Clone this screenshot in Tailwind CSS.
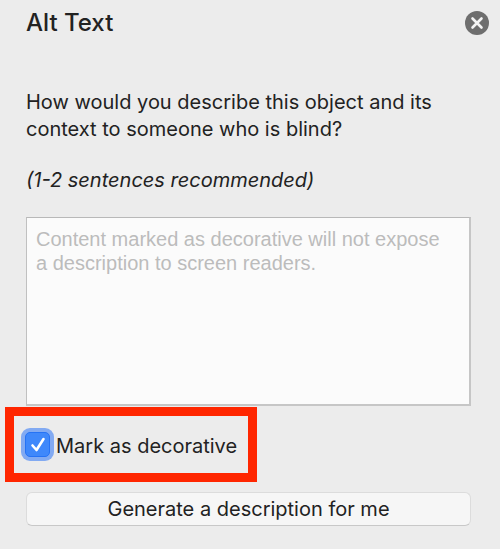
<!DOCTYPE html>
<html lang="en">
<head>
<meta charset="utf-8">
<title>Alt Text</title>
<script src="https://cdn.jsdelivr.net/npm/@tailwindcss/browser@4"></script>
</head>
<body class="min-h-screen bg-[#ececec] font-['Inter',sans-serif] text-[20px] leading-[27px] text-[#222]">
<main class="pt-2 pr-[29px] pb-[23px] pl-[26px]">
  <header class="-mr-[18px] flex items-center justify-between">
    <h1 class="pt-px text-[24px] leading-[28px] font-medium">Alt Text</h1>
    <button type="button" aria-label="Close" class="size-6">
      <svg viewBox="0 0 24 24" class="size-6"><circle cx="12" cy="12" r="12" fill="#6e6e6e"/><path d="M7.500 7.500l9 9M16.500 7.500l-9 9" stroke="#f4f4f4" stroke-width="2.600" stroke-linecap="round"/></svg>
    </button>
  </header>
  <label for="description" class="mt-[52px] block">How would you describe this object and its<br>context to someone who is blind?</label>
  <p class="mt-6 italic">(1-2 sentences recommended)</p>
  <textarea id="description" placeholder="Content marked as decorative will not expose a description to screen readers." class="mt-[23px] block h-[189px] w-full resize-none border-2 border-t-[#b8b8b8] border-r-[#c6c6c6] border-b-[#c6c6c6] border-l-[#c0c0c0] border-t border-l bg-[#fbfbfb] py-[9px] pr-6 pl-[9px] font-['Liberation_Sans',sans-serif] text-[20px] leading-[24px] placeholder:text-[#bcbcbc]"></textarea>
  <div class="mt-px -ml-[21px] flex h-[75px] w-[252px] items-center border-[9px] border-[#ff2600] pl-[7px]">
    <label class="flex items-center gap-0.5 whitespace-nowrap">
      <span class="relative size-[33px] rounded-[9px] bg-[#82aaf2] p-1">
        <input type="checkbox" checked class="block size-[25px] appearance-none rounded-[5px] border border-[#2673f5] bg-[#3f88fb]">
        <svg viewBox="0 0 33 33" class="pointer-events-none absolute inset-0 size-[33px]" fill="none"><path d="M11.500 17.500l4 4.500 7-11" stroke="#fff" stroke-width="2.600" stroke-linecap="round" stroke-linejoin="round"/></svg>
      </span>
      <span class="pt-1">Mark as decorative</span>
    </label>
  </div>
  <button type="button" class="mt-[10px] block h-[34px] w-full rounded-md border border-[#dcdcdc] border-b-[#c8c8c8] bg-[#f6f6f6]">Generate a description for me</button>
</main>
</body>
</html>
